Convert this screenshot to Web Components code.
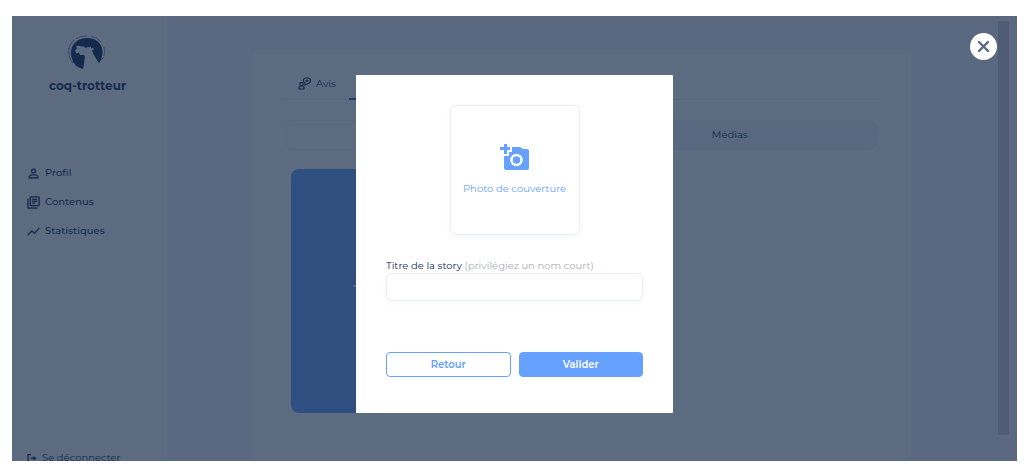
<!DOCTYPE html>
<html lang="fr">
<head>
<meta charset="utf-8">
<meta name="viewport" content="width=device-width, initial-scale=1">
<title>coq-trotteur</title>
<style>
body { margin: 0; background: #fff; color: #142a55; font: 400 10px/16px Montserrat, Inter, "Open Sans", sans-serif; }
</style>
</head>
<body>
<app-shell>
  <side-bar slot="side">
    <nav-item icon="profile">Profil</nav-item>
    <nav-item icon="contents">Contenus</nav-item>
    <nav-item icon="stats">Statistiques</nav-item>
    <nav-item slot="foot" icon="logout">Se déconnecter</nav-item>
  </side-bar>
  <content-card slot="main"></content-card>
  <story-dialog slot="overlay"></story-dialog>
</app-shell>
<script>
function define(name, html) {
  customElements.define(name, class extends HTMLElement {
    constructor() {
      super();
      const t = document.createElement('template');
      t.innerHTML = html;
      this.attachShadow({ mode: 'open' }).append(t.content.cloneNode(true));
    }
  });
}

define('app-shell', `
<style>
:host { display: block; padding: 16px 7px 10px 12px; }
.frame { position: relative; display: grid; grid-template-columns: 155px 1fr 19px; height: calc(100vh - 26px); min-height: 400px; overflow: hidden; background: #f5f7fc; }
.main { padding: 33px 87px 0 85px; display: grid; }
.side { background: #fcfdff; display: grid; }
.track { padding: 5px 8px 26px 0; display: grid; }
.thumb { background: #cccfd3; }
.overlay { position: absolute; inset: 0; background: rgba(24,44,74,.7); }
</style>
<div class="frame">
  <div class="side"><slot name="side"></slot></div>
  <main class="main"><slot name="main"></slot></main>
  <div class="track"><div class="thumb"></div></div>
  <div class="overlay"><slot name="overlay"></slot></div>
</div>`);

define('side-bar', `
<style>
:host { display: flex; flex-direction: column; height: calc(100vh - 26px); min-height: 400px; }
.brand { display: flex; flex-direction: column; align-items: center; gap: 8px; padding-top: 18px; margin-right: 4px; font-size: 12px; font-weight: 700; }
svg { display: block; }
nav { display: flex; flex-direction: column; gap: 13px; padding: 71px 0 0 14px; flex: 1; font-weight: 500; }
.foot { padding-left: 14px; margin-bottom: -5px; }
</style>
<div class="brand">
  <svg width="40" height="36" viewBox="0 0 40 36" aria-hidden="true">
    <path fill="#0b2458" d="M12 34C6 32 3 25 3 19 3 10 10 4 19 4c8 0 13 4 15 10 1 6 0 11-3 15.500L25 19.500l-1-3 2-1-1-2-2 1 0-2-2 1-1-1-2 2-2-2-3 0-2-1-3 1 1 2-2 2 1 3 3-1 1 2.500 4 0 1 2c-1 4-1 9-2 12Z"/>
    <path fill="none" stroke="#0b2458" stroke-width="1" opacity=".5" d="M8 5Q12 1.500 19 2M23 2q6 1 10 6M36 13q1 5 0 9M1 14Q0 24 5 29M6 6Q1 11 1 15M33 26l3-3"/>
  </svg>
  <span>coq-trotteur</span>
</div>
<nav><slot></slot></nav>
<div class="foot"><slot name="foot"></slot></div>`);

const icons = {
  profile: '<path d="M12 5.900a2.100 2.100 0 1 1 0 4.200 2.100 2.100 0 0 1 0-4.200m0 9c3 0 6.100 1.500 6.100 2.100v1.100H5.900V17c0-.6 3.100-2.100 6.100-2.100M12 4a4 4 0 1 0 0 8 4 4 0 0 0 0-8m0 9c-2.700 0-8 1.300-8 4v3h16v-3c0-2.700-5.300-4-8-4"/>',
  contents: '<path d="M4 6H2v14c0 1.100.9 2 2 2h14v-2H4zm16-4H8a2 2 0 0 0-2 2v12c0 1.100.9 2 2 2h12c1.100 0 2-.9 2-2V4a2 2 0 0 0-2-2m0 14H8V4h12zM10 9h8v2h-8zm0 3h4v2h-4zm0-6h8v2h-8z"/>',
  stats: '<path d="m3.500 18.500 6-6 4 4L22 6.900l-1.400-1.400-7.100 8-4-4L2 17z"/>',
  logout: '<path d="M10 4H3v17h7v-2.500H5.500v-12H10zM15 8v3h-5v3h5v3l6-4.500z"/>'
};
customElements.define('nav-item', class extends HTMLElement {
  connectedCallback() {
    const name = this.getAttribute('icon');
    const size = name === 'logout' ? 12 : 15;
    this.attachShadow({ mode: 'open' }).innerHTML = `
<style>
:host { display: block; }
a { display: flex; align-items: center; gap: 4px; color: inherit; text-decoration: none; }
svg { fill: #142a55; stroke: #142a55; stroke-width: .3; }
</style>
<a href="#"><svg width="${size}" height="${size}" viewBox="0 0 24 24" aria-hidden="true">${icons[name]}</svg><slot></slot></a>`;
  }
});

define('content-card', `
<style>
:host { display: block; background: #fff; border-radius: 8px; padding: 18px 31px 0; }
button { font: inherit; color: inherit; background: none; border: 0; padding: 0; }
.tabs { display: flex; gap: 8px; border-bottom: 1px solid #edf0f5; height: 32px; }
.tab { display: flex; align-items: center; gap: 5px; padding: 0 5px 0 15px; height: 33px; }
.tab.on { width: 90px; border-bottom: 2px solid #2f5fb8; }
.tab svg { fill: none; stroke: #142a55; stroke-width: 1.200; }
.switch { display: grid; grid-template-columns: 1fr 1fr; margin: 20px 2px 0; height: 30px; background: #f3f6fc; border-radius: 8px; }
.switch button.on { background: #fff; border: 1px solid #f3f6fc; border-radius: 8px; }
.story { display: grid; place-items: center; width: 138px; height: 244px; margin: 19px 0 0 8px; padding-bottom: 10px; background: #66a1ff; border-radius: 8px; }
</style>
<div class="tabs" role="tablist">
  <button class="tab" role="tab"><svg width="13" height="13" viewBox="0 0 13 13" aria-hidden="true"><circle cx="3.500" cy="7" r="1.700"/><path d="M1 12v-1q0-2 2.500-2t2.500 2v1ZM5.500 2.500Q6 1 8 1h2q2.500 0 2.500 2.500T10 6.500L7 8V6Q5 5 5.500 2.500M9 2.500v2.500M7.500 3.700h3"/></svg>Avis</button>
  <button class="tab on" role="tab" aria-selected="true" aria-label="Stories"></button>
</div>
<div class="switch">
  <button class="on" aria-label="Stories"></button>
  <button>Médias</button>
</div>
<button class="story" aria-label="Nouvelle story"><svg width="14" height="14" viewBox="0 0 14 14" aria-hidden="true"><path stroke="#fff" stroke-width="2" stroke-linecap="round" d="M1 7h12M7 1v12"/></svg></button>`);

define('story-dialog', `
<style>
:host { display: flex; justify-content: center; padding-top: 59px; }
form { box-sizing: border-box; display: flex; flex-direction: column; width: 317px; min-height: 338px; max-width: 100%; padding: 30px 30px 36px; background: #fff; }
button { font: inherit; cursor: pointer; }
.cover { align-self: center; box-sizing: border-box; display: flex; flex-direction: column; align-items: center; justify-content: center; gap: 10px; width: 130px; height: 130px; padding: 0; color: #66a1ff; background: #fff; border: 1px solid #eceef1; border-radius: 6px; box-shadow: 0 2px 6px rgba(24,44,74,.04); white-space: nowrap; }
.cover svg { fill: #66a1ff; }
label { margin-top: 24px; line-height: 14px; color: #142a55; white-space: nowrap; }
label span { color: #a9aeb8; }
input { box-sizing: border-box; width: 100%; height: 28px; font: inherit; padding: 0 8px; border: 1px solid #eaecf0; border-radius: 6px; box-shadow: 0 2px 6px rgba(24,44,74,.04); outline: 0; }
.actions { display: grid; grid-template-columns: 1fr 1fr; gap: 8px; margin-top: auto; }
.actions button { height: 25px; padding: 0; border: 1px solid #66a1ff; border-radius: 4px; background: #fff; color: #66a1ff; font-weight: 600; }
.actions .ok { background: #66a1ff; color: #fff; }
.close { position: absolute; top: 17px; right: 20px; display: grid; place-items: center; width: 27px; height: 27px; padding: 0; border: 0; border-radius: 50%; background: #fff; }
</style>
<form role="dialog" aria-label="Nouvelle story">
  <button class="cover" type="button">
    <svg width="30" height="28" viewBox="0 0 30 28" aria-hidden="true"><path d="M4 1h3v3h3v3H7v4H4V7H0V4h4ZM12 4h8l3 2h4q2 0 2 2v17q0 2-2 2H6q-2 0-2-2V13h5V9h3Z"/><circle cx="16.500" cy="17" r="5" fill="none" stroke="#fff" stroke-width="2.500"/></svg>
    Photo de couverture
  </button>
  <label for="title">Titre de la story <span>(privilégiez un nom court)</span></label>
  <input id="title" type="text">
  <div class="actions"><button type="button">Retour</button><button class="ok" type="button">Valider</button></div>
</form>
<button class="close" aria-label="Fermer"><svg width="13" height="13" viewBox="0 0 13 13" aria-hidden="true"><path stroke="#5a687e" stroke-width="2.400" stroke-linecap="round" d="m2 2 9 9m0-9-9 9"/></svg></button>`);
</script>
</body>
</html>
